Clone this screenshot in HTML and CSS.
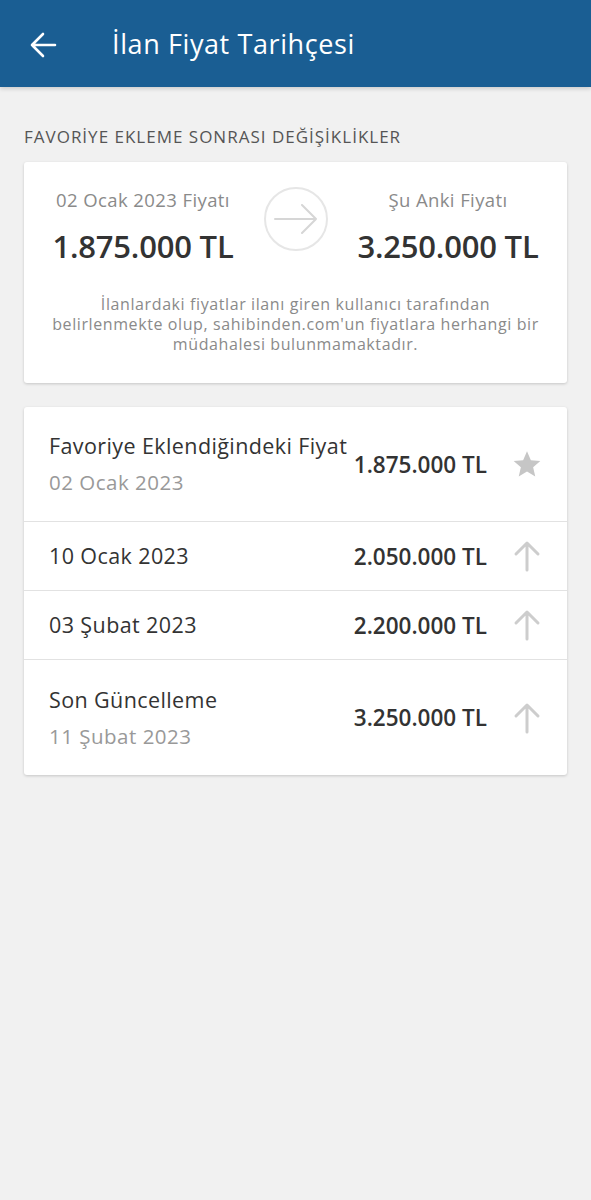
FILE: index.html
```html
<!DOCTYPE html>
<html lang="tr">
<head>
  <meta charset="UTF-8" />
  <title>İlan Fiyat Tarihçesi</title>
  <link rel="stylesheet" href="styles.css">
</head>
<body>

  <header class="app-bar">
    <svg class="back-icon" width="28" height="28" viewBox="0 0 28 28">
      <path d="M26 14H3M14 3L3 14l11 11" fill="none" stroke="#fff" stroke-width="2.6" stroke-linecap="round" stroke-linejoin="round"/>
    </svg>
    <h1>İlan Fiyat Tarihçesi</h1>
  </header>

  <main class="content">
    <h2 class="section-title">FAVORİYE EKLEME SONRASI DEĞİŞİKLİKLER</h2>

    <div class="card summary">
      <div class="compare">
        <div class="price-col">
          <div class="price-label">02 Ocak 2023 Fiyatı</div>
          <div class="price-big">1.875.000 TL</div>
        </div>
        <div class="arrow-circle">
          <svg width="44" height="30" viewBox="0 0 44 30">
            <path d="M1 15h41M28 1l14 14-14 14" fill="none" stroke="#d6d6d6" stroke-width="2" stroke-linecap="round" stroke-linejoin="round"/>
          </svg>
        </div>
        <div class="price-col">
          <div class="price-label">Şu Anki Fiyatı</div>
          <div class="price-big">3.250.000 TL</div>
        </div>
      </div>
      <p class="disclaimer">İlanlardaki fiyatlar ilanı giren kullanıcı tarafından<br>belirlenmekte olup, sahibinden.com'un fiyatlara herhangi bir<br>müdahalesi bulunmamaktadır.</p>
    </div>

    <div class="card history">
      <div class="row tall">
        <div class="row-text">
          <div class="row-title">Favoriye Eklendiğindeki Fiyat</div>
          <div class="row-sub">02 Ocak 2023</div>
        </div>
        <div class="row-price">1.875.000 TL</div>
        <svg class="row-icon" width="32" height="32" viewBox="0 0 24 24">
          <path d="M12 2.5l2.9 6.6 7.1.6-5.4 4.7 1.6 7-6.2-3.7-6.2 3.7 1.6-7L2 9.7l7.1-.6z" fill="#c6c6c6"/>
        </svg>
      </div>
      <div class="row">
        <div class="row-text">
          <div class="row-title">10 Ocak 2023</div>
        </div>
        <div class="row-price">2.050.000 TL</div>
        <svg class="row-icon" width="32" height="32" viewBox="0 0 32 32">
          <path d="M16 30V4M5 14L16 3l11 11" fill="none" stroke="#cdcdcd" stroke-width="3" stroke-linecap="round" stroke-linejoin="round"/>
        </svg>
      </div>
      <div class="row">
        <div class="row-text">
          <div class="row-title">03 Şubat 2023</div>
        </div>
        <div class="row-price">2.200.000 TL</div>
        <svg class="row-icon" width="32" height="32" viewBox="0 0 32 32">
          <path d="M16 30V4M5 14L16 3l11 11" fill="none" stroke="#cdcdcd" stroke-width="3" stroke-linecap="round" stroke-linejoin="round"/>
        </svg>
      </div>
      <div class="row tall">
        <div class="row-text">
          <div class="row-title">Son Güncelleme</div>
          <div class="row-sub">11 Şubat 2023</div>
        </div>
        <div class="row-price">3.250.000 TL</div>
        <svg class="row-icon" width="32" height="32" viewBox="0 0 32 32">
          <path d="M16 30V4M5 14L16 3l11 11" fill="none" stroke="#cdcdcd" stroke-width="3" stroke-linecap="round" stroke-linejoin="round"/>
        </svg>
      </div>
    </div>
  </main>

</body>
</html>
```

FILE: styles.css
```css
* {
  box-sizing: border-box;
}

body {
  margin: 0;
  background: #f1f1f1;
  font-family: 'Open Sans', 'Noto Sans', sans-serif;
  color: #333;
  min-height: 1200px;
}

.app-bar {
  height: 87px;
  background: #1a5e93;
  display: flex;
  align-items: center;
  padding: 0 0 0 29px;
  box-shadow: 0 2px 4px rgba(0, 0, 0, 0.15);
}

.back-icon {
  margin-top: 2px;
}

.app-bar h1 {
  margin: 0 0 0 55px;
  color: #fff;
  font-size: 27px;
  font-weight: 400;
  letter-spacing: 0.6px;
}

.content {
  padding: 0 24px;
}

.section-title {
  margin: 0;
  padding: 38px 0 13px;
  font-size: 17px;
  line-height: 24px;
  font-weight: 400;
  letter-spacing: 1px;
  color: #555;
}

.card {
  background: #fff;
  border-radius: 3px;
  box-shadow: 0 1px 3px rgba(0, 0, 0, 0.18);
}

.summary {
  padding: 26px 20px 29px;
}

.compare {
  display: flex;
  justify-content: space-between;
}

.price-col {
  width: 198px;
  text-align: center;
}

.price-label {
  font-size: 18.5px;
  line-height: 24px;
  letter-spacing: 0.4px;
  color: #8a8a8a;
}

.price-big {
  margin-top: 14px;
  font-size: 31px;
  line-height: 40px;
  font-weight: 600;
  color: #333;
  letter-spacing: -0.2px;
}

.arrow-circle {
  width: 64px;
  height: 64px;
  margin-top: -1px;
  border: 2px solid #e6e6e6;
  border-radius: 50%;
  display: flex;
  align-items: center;
  justify-content: center;
}

.disclaimer {
  margin: 28px 0 0;
  font-size: 16px;
  line-height: 20px;
  letter-spacing: 0.6px;
  color: #8a8a8a;
  text-align: center;
}

.history {
  margin-top: 24px;
}

.row {
  display: flex;
  align-items: center;
  height: 69px;
  padding: 0 24px 0 25px;
  border-top: 1px solid #e2e2e2;
}

.row.tall {
  height: 116px;
}

.row:first-child {
  border-top: none;
  height: 114px;
}

.row-text {
  flex: 1;
}

.row-title {
  font-size: 21.5px;
  line-height: 26px;
  letter-spacing: 0.4px;
  color: #333;
}

.row-sub {
  margin-top: 10px;
  font-size: 20.5px;
  line-height: 26px;
  letter-spacing: 0.5px;
  color: #999;
}

.row-price {
  font-size: 22.5px;
  font-weight: 600;
  color: #333;
}

.row-icon {
  margin-left: 24px;
}
```
